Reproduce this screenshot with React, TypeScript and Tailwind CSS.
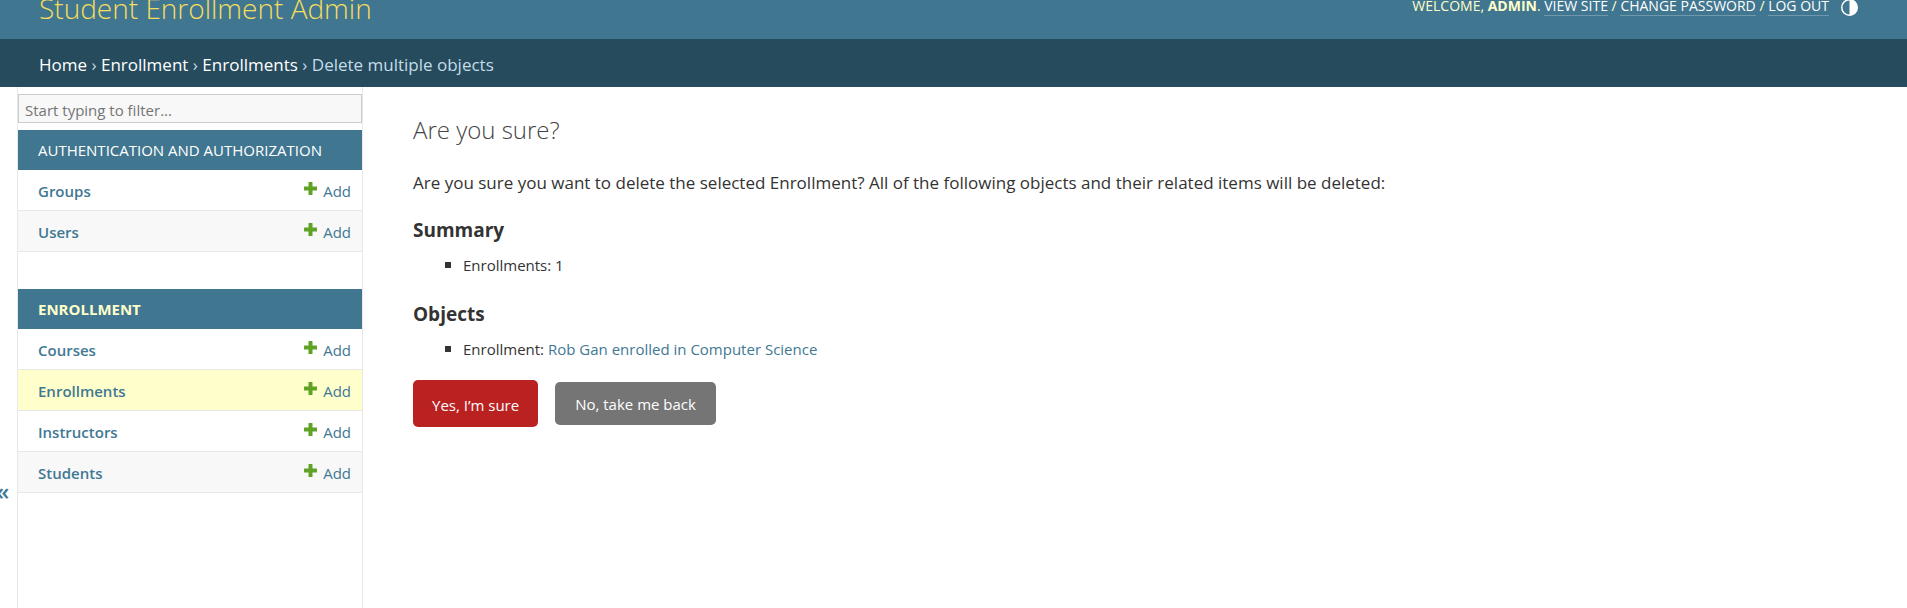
import React from "react";

type Model = { name: string; current?: boolean };
type AppGroup = { label: string; current?: boolean; models: Model[] };

const groups: AppGroup[] = [
  {
    label: "Authentication and Authorization",
    models: [{ name: "Groups" }, { name: "Users" }],
  },
  {
    label: "Enrollment",
    current: true,
    models: [
      { name: "Courses" },
      { name: "Enrollments", current: true },
      { name: "Instructors" },
      { name: "Students" },
    ],
  },
];

function PlusIcon() {
  return (
    <svg className="mb-[7px] size-[13px]" viewBox="0 0 13 13" aria-hidden="true">
      <path
        d="M5 0h3q.5 0 .5.5v4H12.500q.5 0 .5.5v3q0 .5-.5.5H8.500v4q0 .5-.5.5H5q-.5 0-.5-.5v-4H.5Q0 8.500 0 8V5q0-.5.5-.5h4v-4Q4.500 0 5 0z"
        fill="#5fa225"
      />
    </svg>
  );
}

function ThemeIcon() {
  return (
    <svg className="size-[17px]" viewBox="0 0 16 16" aria-hidden="true">
      <circle cx="8" cy="8" r="7.300" fill="none" stroke="#fff" strokeWidth="1.400" />
      <path d="M8 .5a7.500 7.500 0 0 1 0 15z" fill="#fff" />
    </svg>
  );
}

function ToolLink({ children }: { children: React.ReactNode }) {
  return (
    <a href="#" className="border-b border-white/25 text-white">
      {children}
    </a>
  );
}

function Header() {
  return (
    <header className="flex h-[39px] items-start justify-between bg-[#417690] pr-[49px] pl-[39px] text-[#ffffcc]">
      <h1 className="text-[28px] leading-4 font-light text-[#f5dd5d]">
        <a href="#">Student Enrollment Admin</a>
      </h1>
      <div className="flex items-start gap-3">
        <div className="text-[14px] leading-3 font-normal uppercase">
          Welcome, <strong className="font-bold">admin</strong>. <ToolLink>View site</ToolLink> /{" "}
          <ToolLink>Change password</ToolLink> / <ToolLink>Log out</ToolLink>
        </div>
        <button type="button" aria-label="Toggle theme" className="-mt-px">
          <ThemeIcon />
        </button>
      </div>
    </header>
  );
}

function Breadcrumbs() {
  return (
    <nav
      aria-label="Breadcrumbs"
      className="h-12 bg-[#264b5d] px-[39px] pt-px text-[17px] leading-[50px] text-[#c4dce8]"
    >
      <a href="#" className="text-white">Home</a> › <a href="#" className="text-white">Enrollment</a> ›{" "}
      <a href="#" className="text-white">Enrollments</a> › Delete multiple objects
    </nav>
  );
}

function Sidebar() {
  return (
    <nav aria-label="Sidebar" className="w-[346px] shrink-0 border-x border-[#e8e8e8] pt-[7px]">
      <input
        type="text"
        aria-label="Filter navigation items"
        placeholder="Start typing to filter..."
        className="block h-[29px] w-full border border-[#cccccc] bg-[#f8f8f8] px-1.5 pt-0.5 text-[15px] leading-5 placeholder:text-[#757575]"
      />
      <div className="mt-[7px] flex flex-col gap-[37px]">
        {groups.map((group) => (
          <table key={group.label} className="w-full border-collapse text-[#417893]">
            <caption
              className={
                group.current
                  ? "h-10 bg-[#417690] pl-5 text-left text-[15px] leading-[41px] font-bold text-[#ffffcc] uppercase"
                  : "h-10 bg-[#417690] pl-5 text-left text-[15px] leading-[41px] text-white uppercase"
              }
            >
              <a href="#">{group.label}</a>
            </caption>
            <tbody>
              {group.models.map((model) => (
                <tr
                  key={model.name}
                  className={
                    model.current
                      ? "bg-[#ffffcc] shadow-[inset_0_-1px_#e8e8e8]"
                      : "shadow-[inset_0_-1px_#e8e8e8] even:bg-[#f8f8f8]"
                  }
                >
                  <th scope="row" className="h-[41px] pt-0.5 pb-0 pl-5 text-left text-[15px] font-semibold">
                    <a href="#">{model.name}</a>
                  </th>
                  <td className="h-[41px] pt-0.5 pr-[11px] pb-0 text-[15px]">
                    <a href="#" className="flex items-center justify-end gap-1.5">
                      <PlusIcon />
                      Add
                    </a>
                  </td>
                </tr>
              ))}
            </tbody>
          </table>
        ))}
      </div>
    </nav>
  );
}

function Bulleted({ children }: { children: React.ReactNode }) {
  return (
    <ul className="mt-[9px] pl-8 text-[15px] leading-6">
      <li className="flex items-center gap-3 before:size-1.5 before:bg-[#333333]">
        <span>{children}</span>
      </li>
    </ul>
  );
}

function Content() {
  return (
    <main className="min-w-0 grow px-[50px] pt-6 text-[#333333]">
      <h1 className="text-[24px] leading-[38px] font-light text-[#444444]">Are you sure?</h1>
      <p className="mt-[21px] text-[17px] leading-[26px]">
        Are you sure you want to delete the selected Enrollment? All of the following objects and their
        related items will be deleted:
      </p>
      <h2 className="mt-5 text-[19px] leading-7 font-bold">Summary</h2>
      <Bulleted>Enrollments: 1</Bulleted>
      <h2 className="mt-[23px] text-[19px] leading-7 font-bold">Objects</h2>
      <Bulleted>
        Enrollment: <a href="#" className="text-[#417893]">Rob Gan enrolled in Computer Science</a>
      </Bulleted>
      <form className="mt-[19px] flex items-center gap-[17px]" onSubmit={(e) => e.preventDefault()}>
        <button type="submit" className="h-[47px] rounded-[5px] bg-[#ba2121] px-[19px] pt-1 text-[15px] text-white">
          Yes, I’m sure
        </button>
        <a href="#" className="h-[43px] rounded-[5px] bg-[#757575] px-5 text-[15px] leading-[45px] text-white">
          No, take me back
        </a>
      </form>
    </main>
  );
}

export default function App() {
  return (
    <div
      className="flex min-h-screen flex-col bg-white"
      style={{ fontFamily: '"Segoe UI", "Open Sans", "Noto Sans", sans-serif' }}
    >
      <Header />
      <Breadcrumbs />
      <div className="flex grow items-stretch">
        <button
          type="button"
          aria-label="Toggle navigation"
          className="flex w-[17px] shrink-0 justify-start pt-96 text-[24px] leading-10 font-semibold text-[#417893]"
        >
          <span className="-ml-1">«</span>
        </button>
        <Sidebar />
        <Content />
      </div>
    </div>
  );
}
